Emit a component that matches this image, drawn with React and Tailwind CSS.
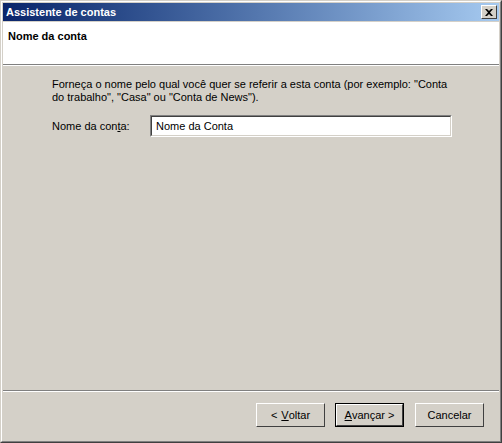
export default function App() {
    return (
        <div
            className="w-[502px] h-[443px] bg-[#d4d0c8] text-black text-[11px] leading-[13px] flex flex-col border-t border-l border-t-[#d4d0c8] border-l-[#d4d0c8] border-r border-b border-r-[#404040] border-b-[#404040]"
            style={{ fontFamily: '"Liberation Sans", Arial, sans-serif' }}
        >
            <div className="flex-1 flex flex-col border-t border-l border-t-white border-l-white border-r border-b border-r-[#808080] border-b-[#808080] p-px">
                {/* title bar */}
                <div className="h-[18px] flex items-center justify-between pl-[3px] pr-[2px] bg-gradient-to-r from-[#0a246a] to-[#a6caf0]">
                    <span className="text-white font-bold">Assistente de contas</span>
                    <button className="w-4 h-[14px] bg-[#d4d0c8] flex items-center justify-center border-t border-l border-t-white border-l-white border-r border-b border-r-[#404040] border-b-[#404040]">
                        <svg width="8" height="7" viewBox="0 0 8 7">
                            <path d="M0 0h2l2 2 2-2h2L5 3.5 8 7H6L4 5 2 7H0l3-3.5z" fill="#000" />
                        </svg>
                    </button>
                </div>

                {/* header */}
                <div className="mt-px h-[43px] bg-white pl-[5px] pt-[8px] border-b border-b-[#808080]">
                    <span className="font-bold">Nome da conta</span>
                </div>
                <div className="h-px bg-white" />

                {/* body */}
                <div className="flex-1 pl-[49px] pt-[12px]">
                    <p className="w-[400px]">
                        Forneça o nome pelo qual você quer se referir a esta conta (por exemplo: "Conta do trabalho", "Casa" ou "Conta de News").
                    </p>
                    <div className="flex items-center mt-[11px]">
                        <span className="w-[98px]">
                            Nome da con<u>t</u>a:
                        </span>
                        <div className="w-[302px] h-[22px] border-t border-l border-t-[#808080] border-l-[#808080] border-r border-b border-r-white border-b-white">
                            <div className="h-full bg-white flex items-center pl-[4px] border-t border-l border-t-[#404040] border-l-[#404040] border-r border-b border-r-[#d4d0c8] border-b-[#d4d0c8]">
                                Nome da Conta
                            </div>
                        </div>
                    </div>
                </div>

                {/* footer */}
                <div className="h-px bg-[#808080]" />
                <div className="h-px bg-white" />
                <div className="h-[48px] flex justify-end items-start pt-[11px] pr-[15px]">
                    <button className="w-[69px] h-[24px] flex items-center justify-center border-t border-l border-t-white border-l-white border-r border-b border-r-[#404040] border-b-[#404040]">
                        &lt; <u className="ml-1">V</u>oltar
                    </button>
                    <button className="ml-[10px] w-[69px] h-[24px] border border-black">
                        <div className="h-full flex items-center justify-center border-t border-l border-t-white border-l-white border-r border-b border-r-[#404040] border-b-[#404040]">
                            <u>A</u>vançar &gt;
                        </div>
                    </button>
                    <button className="ml-[11px] w-[69px] h-[24px] flex items-center justify-center border-t border-l border-t-white border-l-white border-r border-b border-r-[#404040] border-b-[#404040]">
                        Cancelar
                    </button>
                </div>
            </div>
        </div>
    );
}
